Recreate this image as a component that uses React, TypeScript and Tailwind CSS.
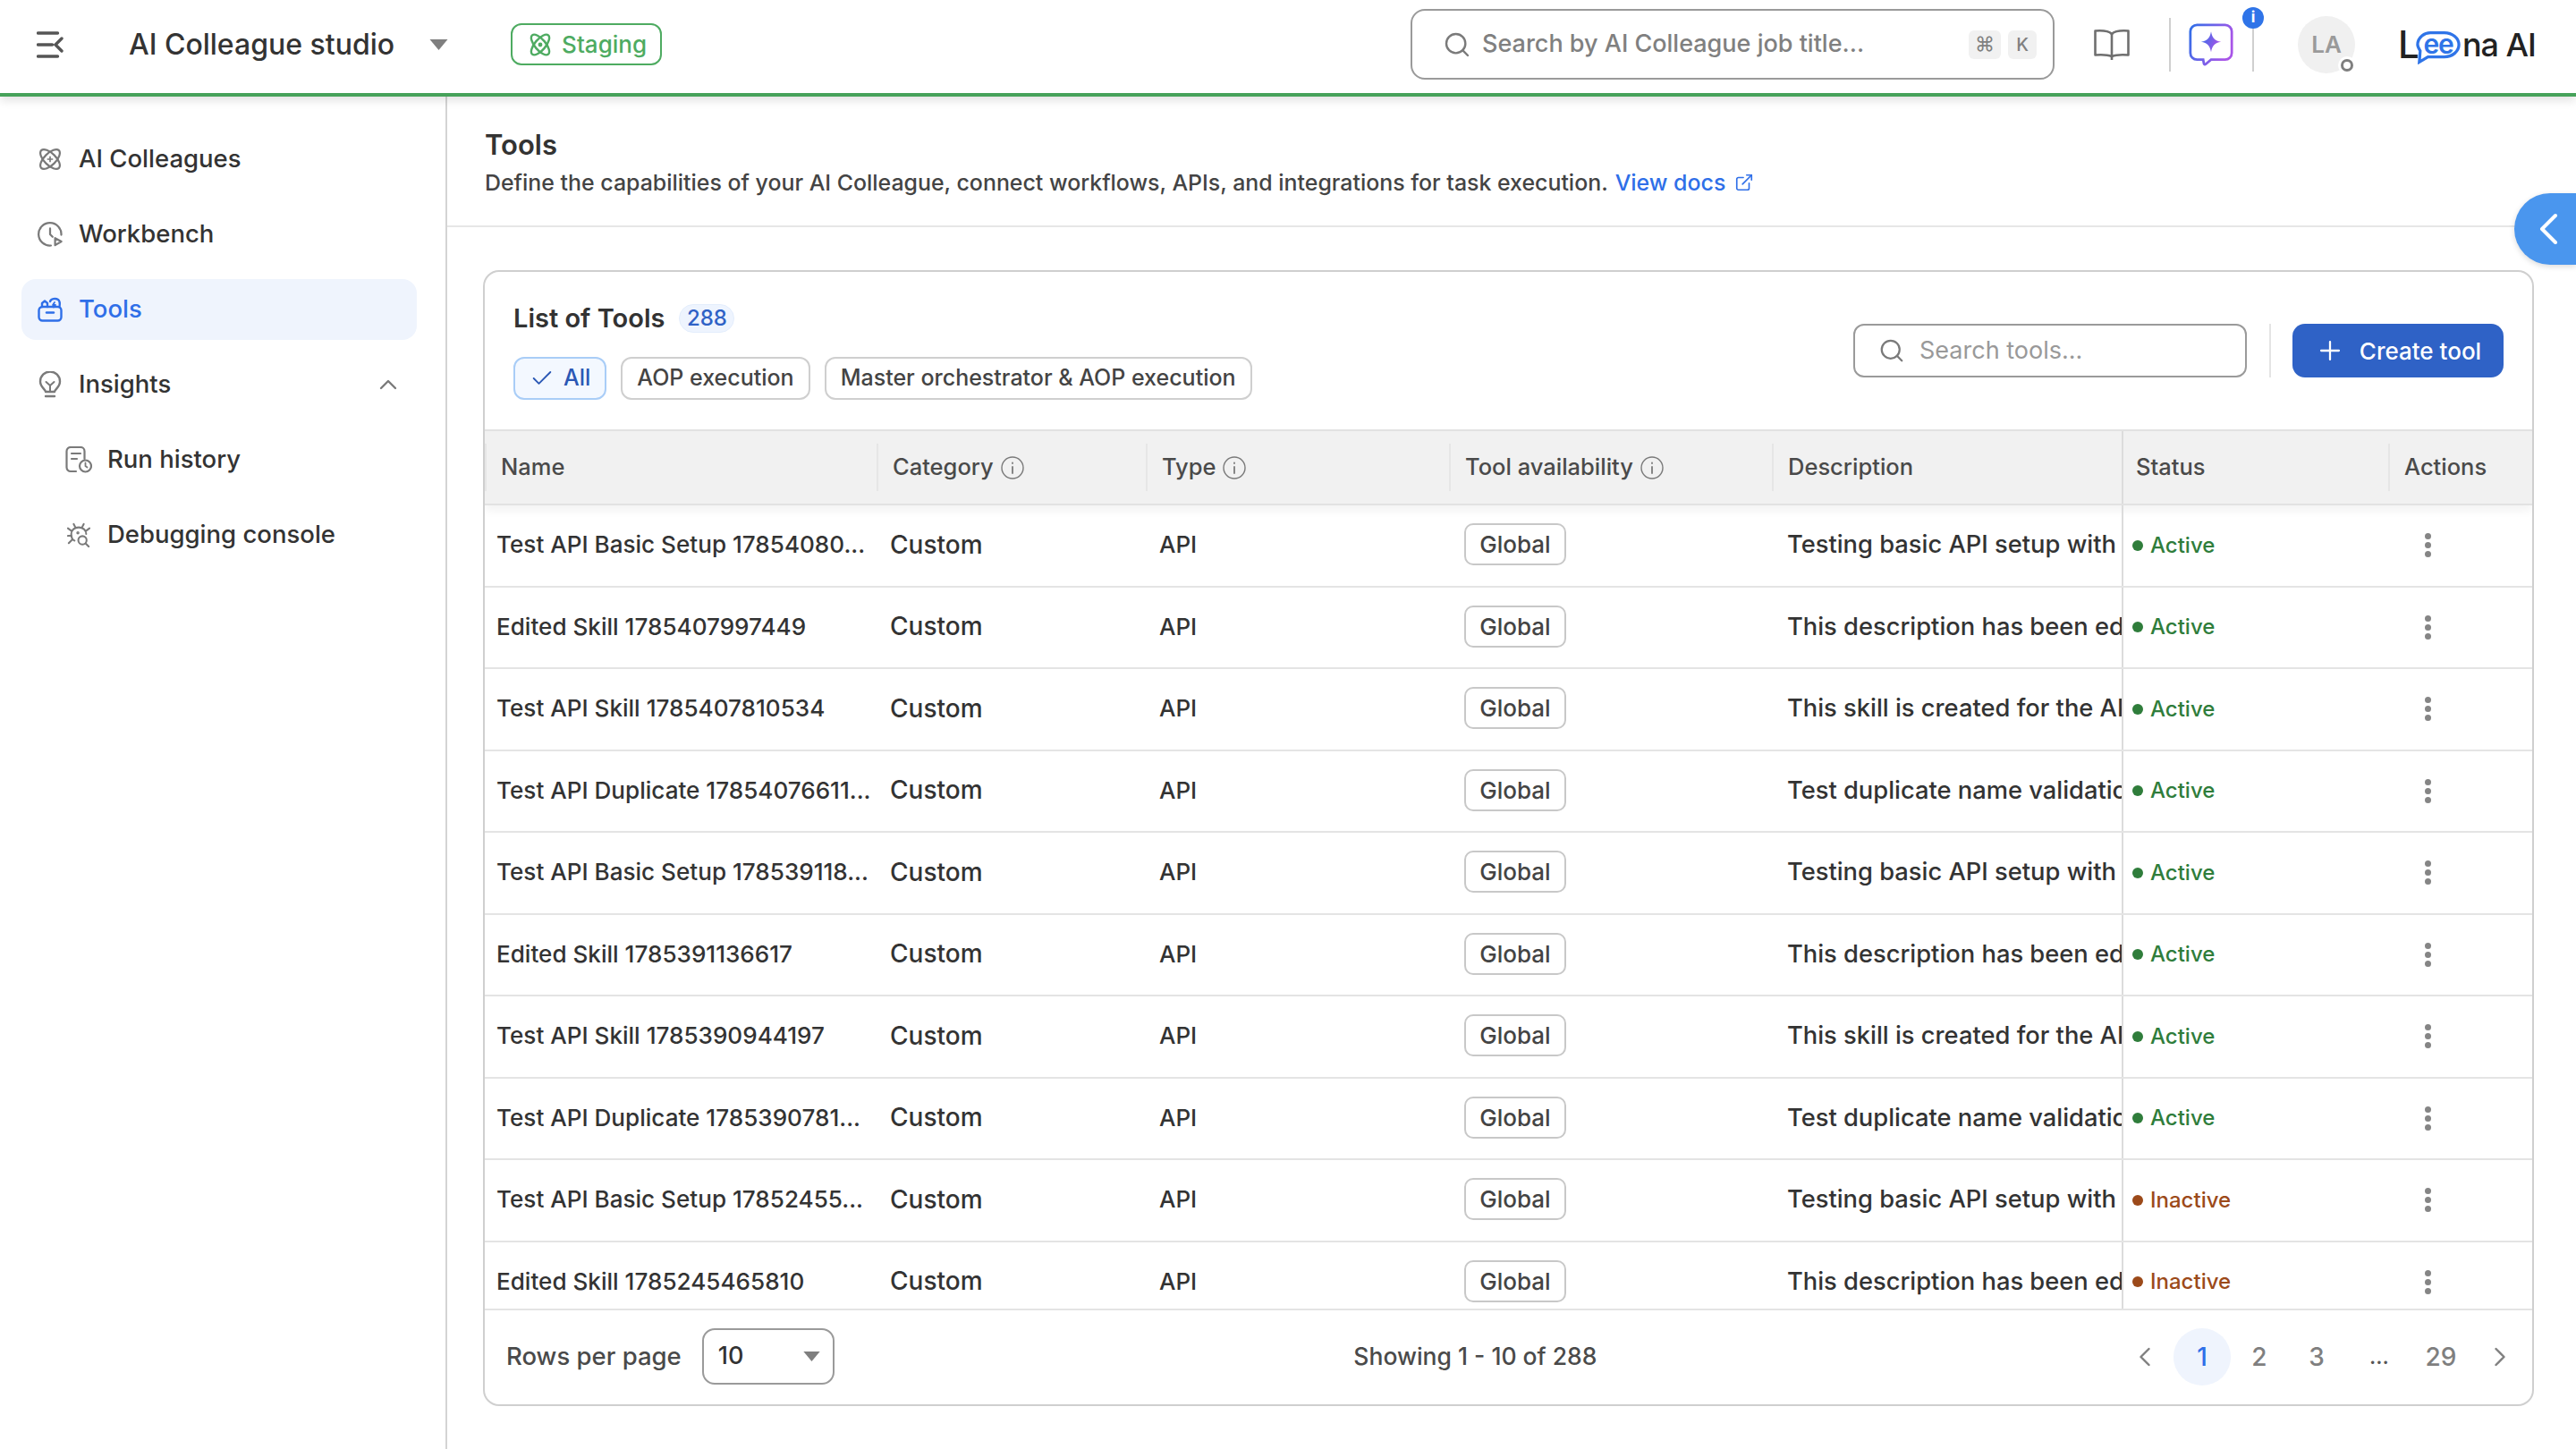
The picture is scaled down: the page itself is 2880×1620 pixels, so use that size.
import { useState } from "react";
import { Check, ChevronLeft, ChevronRight, ChevronUp, ExternalLink, Plus, Search } from "lucide-react";

type Tool = { name: string; description: string; status: "Active" | "Inactive" };

const TOOLS: Tool[] = [
  { name: "Test API Basic Setup 17854080...", description: "Testing basic API setup with custom headers", status: "Active" },
  { name: "Edited Skill 1785407997449", description: "This description has been edited by the test", status: "Active" },
  { name: "Test API Skill 1785407810534", description: "This skill is created for the API test suite", status: "Active" },
  { name: "Test API Duplicate 17854076611...", description: "Test duplicate name validation for skills", status: "Active" },
  { name: "Test API Basic Setup 178539118...", description: "Testing basic API setup with custom headers", status: "Active" },
  { name: "Edited Skill 1785391136617", description: "This description has been edited by the test", status: "Active" },
  { name: "Test API Skill 1785390944197", description: "This skill is created for the API test suite", status: "Active" },
  { name: "Test API Duplicate 1785390781...", description: "Test duplicate name validation for skills", status: "Active" },
  { name: "Test API Basic Setup 17852455...", description: "Testing basic API setup with custom headers", status: "Inactive" },
  { name: "Edited Skill 1785245465810", description: "This description has been edited by the test", status: "Inactive" },
];

const COLS = "grid grid-cols-[438px_301px_339px_361px_391px_298px_160px]";

function AtomIcon({ className, star }: { className?: string; star?: boolean }) {
  return (
    <svg viewBox="0 0 28 28" fill="none" stroke="currentColor" strokeWidth="2.4" className={className}>
      <ellipse cx="14" cy="14" rx="7" ry="15" transform="rotate(45 14 14)" />
      <ellipse cx="14" cy="14" rx="7" ry="15" transform="rotate(-45 14 14)" />
      {star ? (
        <path d="M14 10.5v7M10.5 14h7" strokeWidth="1.8" />
      ) : (
        <circle cx="14" cy="14" r="2.4" fill="currentColor" stroke="none" />
      )}
    </svg>
  );
}

function StagingIcon({ className }: { className?: string }) {
  return (
    <svg viewBox="0 0 28 28" fill="none" stroke="currentColor" strokeWidth="2.6" className={className}>
      <ellipse cx="14" cy="14" rx="6.5" ry="15" transform="rotate(40 14 14)" />
      <ellipse cx="14" cy="14" rx="6.5" ry="15" transform="rotate(-40 14 14)" />
      <circle cx="14" cy="14" r="2.6" fill="currentColor" stroke="none" />
    </svg>
  );
}

function WorkbenchIcon({ className }: { className?: string }) {
  return (
    <svg viewBox="0 0 30 30" fill="none" stroke="currentColor" strokeWidth="2.4" strokeLinecap="round" strokeLinejoin="round" className={className}>
      <path d="M16 28.4A13.6 13.6 0 1 1 28.4 15.6" />
      <path d="M15 8v7l3 3" />
      <path d="M21 19.5l7.5 4-7.5 4.5z" />
    </svg>
  );
}

function ToolsIcon({ className }: { className?: string }) {
  return (
    <svg viewBox="0 0 28 28" fill="none" stroke="currentColor" strokeWidth="2.4" strokeLinecap="round" strokeLinejoin="round" className={className}>
      <rect x="1.5" y="11" width="25" height="15.5" rx="4" />
      <path d="M10 17.5h8" />
      <path d="M5 11V7l3-2.5L11 7v4" />
      <path d="M14 5c1-3 6-4 9-2 2.5 2 2 5 1.5 8" />
      <path d="M19 6l-2 3h3l-2 2.5" strokeWidth="1.8" />
    </svg>
  );
}

function BulbIcon({ className }: { className?: string }) {
  return (
    <svg viewBox="0 0 26 30" fill="none" stroke="currentColor" strokeWidth="2.4" strokeLinecap="round" strokeLinejoin="round" className={className}>
      <path d="M8 23c0-2.5-6-5-6-11.5a11 11 0 0 1 22 0C24 18 18 20.500 18 23z" />
      <path d="M8.500 12l4.500 4 4.500-4M13 16v7" strokeWidth="2" />
      <path d="M8 28h10" />
    </svg>
  );
}

function RunHistoryIcon({ className }: { className?: string }) {
  return (
    <svg viewBox="0 0 30 30" fill="none" stroke="currentColor" strokeWidth="2.2" strokeLinecap="round" className={className}>
      <path d="M12 28H6a4.500 4.500 0 0 1-4.500-4.500V5.500A4.500 4.500 0 0 1 6 1h11a4.500 4.500 0 0 1 4.500 4.500V14" />
      <path d="M7 8h10M7 14h6" />
      <circle cx="22.500" cy="22" r="6.500" />
      <path d="M22.500 18.500V22l2 1.500" strokeWidth="1.800" />
    </svg>
  );
}

function BugIcon({ className }: { className?: string }) {
  return (
    <svg viewBox="0 0 28 30" fill="none" stroke="currentColor" strokeWidth="2.2" strokeLinecap="round" className={className}>
      <path d="M9 22c-3-1-4-5-4-8 0-5 4-8 9-8s9 3 9 8" />
      <path d="M10 6L8 2M18 6l2-4M5 10L1 7M23 10l4-3M5 16H1M6 21l-4 4" />
      <circle cx="13" cy="12.500" r="0.800" />
      <circle cx="18.500" cy="21.500" r="5" />
      <path d="M22.500 25.500l3.500 3.500" />
    </svg>
  );
}

function BookIcon({ className }: { className?: string }) {
  return (
    <svg viewBox="0 0 40 36" fill="none" stroke="currentColor" strokeWidth="2.6" strokeLinejoin="round" className={className}>
      <path d="M20 6C16 2 8 2 1.500 2.500v27C8 29 15 29 20 31c5-2 12-2 18.500-1.500v-27C32 2 24 2 20 6z" />
      <path d="M20 6v29" />
    </svg>
  );
}

function InfoIcon() {
  return (
    <svg viewBox="0 0 26 26" fill="none" stroke="currentColor" strokeWidth="1.4" strokeLinecap="round" className="h-[26px] w-[26px] text-[#7a7a7a]">
      <circle cx="13" cy="13" r="12" />
      <path d="M13 12v7M13 7.500v.5" strokeWidth="1.800" />
    </svg>
  );
}

function ChatIcon() {
  return (
    <svg viewBox="0 0 54 52" fill="none" className="h-[50px] w-[50px]">
      <defs>
        <linearGradient id="chat-grad" x1="0" y1="0" x2="1" y2="0.400">
          <stop offset="0" stopColor="#2f6fe8" />
          <stop offset="1" stopColor="#a855e8" />
        </linearGradient>
      </defs>
      <path
        d="M10 2h34a8 8 0 0 1 8 8v26a8 8 0 0 1-8 8H27l-6.500 5.500c-1 .8-2 .2-2.200-.8L17.500 44H10a8 8 0 0 1-8-8V10a8 8 0 0 1 8-8z"
        stroke="url(#chat-grad)"
        strokeWidth="3"
      />
      <path d="M27 10c1.400 8 4.500 11 12 12.500C31.500 24 28.400 27 27 35c-1.400-8-4.500-11-12-12.500C22.500 21 25.600 18 27 10z" fill="url(#chat-grad)" />
    </svg>
  );
}

function Caret({ className }: { className?: string }) {
  return (
    <svg viewBox="0 0 20 12" className={className}>
      <path d="M0 0h20L10 12z" fill="#7f7f7f" />
    </svg>
  );
}

function Kebab() {
  return (
    <div className="flex flex-col items-center gap-[3px]">
      <span className="h-[7px] w-[7px] rounded-full bg-[#858585]" />
      <span className="h-[7px] w-[7px] rounded-full bg-[#858585]" />
      <span className="h-[7px] w-[7px] rounded-full bg-[#858585]" />
    </div>
  );
}

function Logo() {
  return (
    <div className="flex h-[46px] w-[152px] items-center whitespace-nowrap text-[42px] font-medium leading-none tracking-[-0.02em] text-[#222]">
      <span className="w-[20px]">L</span>
      <span className="relative flex h-[36px] w-[50px] shrink-0 items-center justify-center text-[30px] font-semibold tracking-[-0.04em] text-[#2f74e8]">
        <svg viewBox="0 0 52 38" fill="none" className="absolute left-0 top-[2px] h-[38px] w-[50px]" stroke="#2f74e8" strokeWidth="3.400">
          <path d="M19 2h14a17 14 0 0 1 0 28H14l-10 6 1-13C3 20 2 18 2 16A15 14 0 0 1 19 2z" />
        </svg>
        <span className="relative -mt-[2px]">ee</span>
      </span>
      <span className="ml-[2px] text-[36px] tracking-[-0.03em]">na AI</span>
    </div>
  );
}

function TopBar() {
  return (
    <header className="relative z-10 flex h-[108px] shrink-0 items-center border-b-4 border-[#46a25a] bg-white pb-[5px] pl-[41px] pr-[47px] shadow-[0_4px_10px_rgba(0,0,0,0.12)]">
      <svg viewBox="0 0 30 30" fill="none" stroke="#555" strokeWidth="3.400" strokeLinecap="round" className="h-[30px] w-[30px]">
        <path d="M1.500 2h22M1.500 15h16M1.500 28h22M28 8l-7 7 7 7" />
      </svg>
      <span className="ml-[73px] text-[32px] font-medium text-[#333]">AI Colleague studio</span>
      <Caret className="ml-[39px] h-[12px] w-[21px]" />
      <div className="ml-[70px] flex h-[47px] w-[169px] items-center gap-[11px] rounded-[12px] border-2 border-[#4eab61] pl-[18px] text-[26px] font-medium text-[#4eab61]">
        <StagingIcon className="h-[26px] w-[26px]" />
        Staging
      </div>

      <div className="ml-auto flex h-[79px] w-[720px] items-center rounded-[16px] border-2 border-[#9a9a9a] pl-[34px] pr-[18px]">
        <Search className="h-[32px] w-[32px] text-[#7a7a7a]" strokeWidth={1.800} />
        <span className="ml-[12px] text-[27px] font-medium text-[#808080]">Search by AI Colleague job title...</span>
        <span className="ml-auto flex h-[32px] w-[36px] items-center justify-center rounded-[6px] bg-[#f1f1f1] text-[22px] text-[#808080]">⌘</span>
        <span className="ml-[8px] flex h-[32px] w-[32px] items-center justify-center rounded-[6px] bg-[#f1f1f1] text-[20px] font-medium text-[#808080]">K</span>
      </div>
      <BookIcon className="ml-[44px] h-[36px] w-[40px] text-[#6f6f6f]" />
      <div className="ml-[44px] h-[60px] w-[2px] bg-[#cfcfcf]" />
      <div className="ml-[20px]">
        <ChatIcon />
      </div>
      <div className="relative ml-[21px] h-[60px] w-[2px] bg-[#cfcfcf]">
        <span className="absolute -left-[11px] -top-[12px] flex h-[24px] w-[24px] items-center justify-center rounded-full bg-[#2f74e8] text-[17px] font-bold leading-none text-white">i</span>
      </div>
      <div className="relative ml-[49px] flex h-[64px] w-[64px] items-center justify-center rounded-full bg-[#f0f0f0] text-[26px] font-semibold text-[#9a9a9a]">
        LA
        <span className="absolute -bottom-[1px] -right-[1px] flex h-[20px] w-[20px] items-center justify-center rounded-full bg-white">
          <span className="h-[14px] w-[14px] rounded-full border-[3px] border-[#7f7f7f] bg-white" />
        </span>
      </div>
      <div className="ml-[48px]">
        <Logo />
      </div>
    </header>
  );
}

function NavItem({
  icon,
  label,
  active,
  sub,
  trailing,
}: {
  icon: React.ReactNode;
  label: string;
  active?: boolean;
  sub?: boolean;
  trailing?: React.ReactNode;
}) {
  return (
    <div
      className={`flex h-[68px] items-center rounded-[16px] text-[27.500px] font-medium ${sub ? "pl-[49px]" : "pl-[18px]"} ${
        active ? "bg-[#eff4fd] text-[#2f6fe8]" : "text-[#333]"
      }`}
    >
      <span className={`flex items-center justify-center ${sub ? "w-[30px]" : "w-[28px]"} ${active ? "text-[#2f6fe8]" : "text-[#7a7a7a]"}`}>{icon}</span>
      <span className={sub ? "ml-[17px]" : "ml-[18px]"}>{label}</span>
      {trailing}
    </div>
  );
}

function Sidebar() {
  return (
    <aside className="flex w-[500px] shrink-0 flex-col gap-[16px] border-r-2 border-[#d4d4d4] pl-[24px] pr-[32px] pt-[36px]">
      <NavItem icon={<AtomIcon star className="h-[26px] w-[26px]" />} label="AI Colleagues" />
      <NavItem icon={<WorkbenchIcon className="h-[30px] w-[30px]" />} label="Workbench" />
      <NavItem active icon={<ToolsIcon className="h-[28px] w-[28px]" />} label="Tools" />
      <NavItem
        icon={<BulbIcon className="h-[30px] w-[26px]" />}
        label="Insights"
        trailing={<ChevronUp className="ml-auto mr-[16px] h-[32px] w-[32px] text-[#7a7a7a]" strokeWidth={1.800} />}
      />
      <NavItem sub icon={<RunHistoryIcon className="h-[30px] w-[30px]" />} label="Run history" />
      <NavItem sub icon={<BugIcon className="h-[28px] w-[26px]" />} label="Debugging console" />
    </aside>
  );
}

function HeaderCell({ label, info, className }: { label: string; info?: boolean; className?: string }) {
  return (
    <div className={`flex items-center gap-[8px] border-l-2 border-[#e6e6e6] pl-[16px] ${className ?? ""}`}>
      {label}
      {info && <InfoIcon />}
    </div>
  );
}

function Row({ tool }: { tool: Tool }) {
  const active = tool.status === "Active";
  return (
    <div className={`${COLS} h-[91.500px] items-center border-b-2 border-[#e4e4e4] text-[27.300px] font-medium text-[#333]`}>
      <div className="whitespace-nowrap pb-[2px] pl-[13px] text-[26.100px]">{tool.name}</div>
      <div className="pb-[2px] pl-[15px] text-[28px]">Custom</div>
      <div className="pb-[2px] pl-[15px] text-[26px]">API</div>
      <div className="pl-[17px]">
        <span className="-mt-[2px] inline-flex h-[47px] w-[114px] items-center justify-center rounded-[10px] border-2 border-[#c8c8c8] text-[26px] text-[#444]">Global</span>
      </div>
      <div className="overflow-hidden whitespace-nowrap pl-[17px]">{tool.description}</div>
      <div className={`flex h-full items-center gap-[8px] border-l-2 border-[#dcdcdc] pl-[10px] text-[24px] ${active ? "text-[#2f7d3b]" : "text-[#9c4a1a]"}`}>
        <span className={`h-[12px] w-[12px] rounded-full ${active ? "bg-[#2f7d3b]" : "bg-[#9c4a1a]"}`} />
        {tool.status}
      </div>
      <div className="flex justify-start pl-[41px]">
        <Kebab />
      </div>
    </div>
  );
}

function ToolsCard() {
  const [filter, setFilter] = useState("All");
  const filters = ["All", "AOP execution", "Master orchestrator & AOP execution"];

  return (
    <section className="ml-[40px] mr-[47px] mt-[48px] overflow-hidden rounded-[18px] border-2 border-[#cfcfcf]">
      <div className="flex h-[176px] items-start justify-between pl-[32px] pr-[32px]">
        <div>
          <div className="mt-[34px] flex h-[36px] items-center">
            <span className="text-[29px] font-semibold text-[#333]">List of Tools</span>
            <span className="ml-[16px] flex h-[32px] w-[62px] items-center justify-center rounded-full border border-[#e3edfc] bg-[#eef4fe] text-[24px] font-medium text-[#2f62c6]">288</span>
          </div>
          <div className="mt-[25px] flex gap-[16px]">
            {filters.map((f) => (
              <button
                key={f}
                type="button"
                onClick={() => setFilter(f)}
                className={`flex h-[48px] items-center gap-[10px] rounded-[12px] border-2 px-[16px] text-[25px] font-medium ${
                  filter === f ? "border-[#a9cdf7] bg-[#f3f8ff] text-[#2b58b5]" : "border-[#cfcfcf] text-[#444]"
                }`}
              >
                {filter === f && <Check className="h-[28px] w-[28px]" strokeWidth={1.600} />}
                {f}
              </button>
            ))}
          </div>
        </div>
        <div className="mt-[58px] flex items-center">
          <div className="flex h-[60px] w-[440px] items-center rounded-[12px] border-2 border-[#9a9a9a] pl-[26px]">
            <Search className="h-[30px] w-[30px] text-[#7a7a7a]" strokeWidth={1.800} />
            <span className="ml-[16px] text-[27px] text-[#999]">Search tools...</span>
          </div>
          <div className="ml-[25px] h-[60px] w-[2px] bg-[#e4e4e4]" />
          <button type="button" className="ml-[24px] flex h-[60px] w-[236px] items-center justify-center gap-[16px] rounded-[14px] bg-[#2f62c6] text-[26px] font-medium text-white">
            <Plus className="h-[34px] w-[34px]" strokeWidth={1.600} />
            Create tool
          </button>
        </div>
      </div>

      <div className={`${COLS} h-[85px] border-y-2 border-[#e2e2e2] bg-[#f1f1f1] py-[14px] text-[25.500px] font-medium text-[#4a4a4a] shadow-[0_6px_10px_rgba(0,0,0,0.05)]`}>
        <HeaderCell label="Name" className="border-l-0" />
        <HeaderCell label="Category" info />
        <HeaderCell label="Type" info />
        <HeaderCell label="Tool availability" info />
        <HeaderCell label="Description" />
        <div className="-my-[14px] flex items-center border-l-2 border-[#dcdcdc] pl-[14px]">Status</div>
        <HeaderCell label="Actions" />
      </div>

      <div className="h-[898px] overflow-hidden">
        {TOOLS.map((t) => (
          <Row key={t.name} tool={t} />
        ))}
      </div>

      <footer className="flex h-[107px] items-center justify-between border-t-2 border-[#e4e4e4] pb-[2px] pr-[1px]">
        <div className="flex items-center pl-[24px]">
          <span className="text-[27.500px] font-medium text-[#4a4a4a]">Rows per page</span>
          <div className="ml-[23px] flex h-[63px] w-[148px] items-center justify-between rounded-[14px] border-2 border-[#9a9a9a] pl-[16px] pr-[14px] text-[27px] font-medium text-[#333]">
            10
            <Caret className="h-[11px] w-[19px]" />
          </div>
        </div>
        <span className="text-[26.500px] font-medium text-[#4a4a4a]">Showing 1 - 10 of 288</span>
        <div className="flex items-center text-[28px] font-medium text-[#7f7f7f]">
          <span className="flex w-[64px] justify-center">
            <ChevronLeft className="h-[36px] w-[36px]" strokeWidth={1.600} />
          </span>
          <span className="flex h-[64px] w-[64px] items-center justify-center rounded-full bg-[#eff4fd] text-[#2f6fe8]">1</span>
          <span className="flex w-[64px] justify-center">2</span>
          <span className="flex w-[64px] justify-center">3</span>
          <span className="flex w-[76px] justify-center text-[24px] text-[#555]">...</span>
          <span className="flex w-[62px] justify-center">29</span>
          <span className="flex w-[70px] justify-center">
            <ChevronRight className="h-[36px] w-[36px]" strokeWidth={1.600} />
          </span>
        </div>
      </footer>
    </section>
  );
}

export default function App() {
  return (
    <div className="relative flex h-[1620px] flex-col overflow-hidden bg-white [font-family:Inter,sans-serif]">
      <TopBar />
      <div className="flex min-h-0 flex-1">
        <Sidebar />
        <main className="min-w-0 flex-1">
          <div className="h-[146px] border-b-2 border-[#e6e6e6] pl-[42px] pt-[34px]">
            <h1 className="text-[31px] font-semibold leading-[40px] text-[#333]">Tools</h1>
            <p className="mt-[4px] flex items-center text-[24.900px] font-medium leading-[36px] text-[#444]">
              Define the capabilities of your AI Colleague, connect workflows, APIs, and integrations for task execution.
              <span className="ml-[8px] flex items-center gap-[10px] text-[#2f6fe8]">
                View docs
                <ExternalLink className="h-[22px] w-[22px]" strokeWidth={1.800} />
              </span>
            </p>
          </div>
          <ToolsCard />
        </main>
      </div>
      <button type="button" className="absolute right-0 top-[216px] flex h-[80px] w-[69px] items-center justify-center rounded-l-[40px] bg-[#4a96ee] text-white shadow-[0_2px_6px_rgba(0,0,0,0.15)]">
        <svg viewBox="0 0 22 36" fill="none" stroke="currentColor" strokeWidth="4" strokeLinecap="round" strokeLinejoin="round" className="ml-[6px] h-[36px] w-[22px]">
          <path d="M19 3L4 18l15 15" />
        </svg>
      </button>
    </div>
  );
}
